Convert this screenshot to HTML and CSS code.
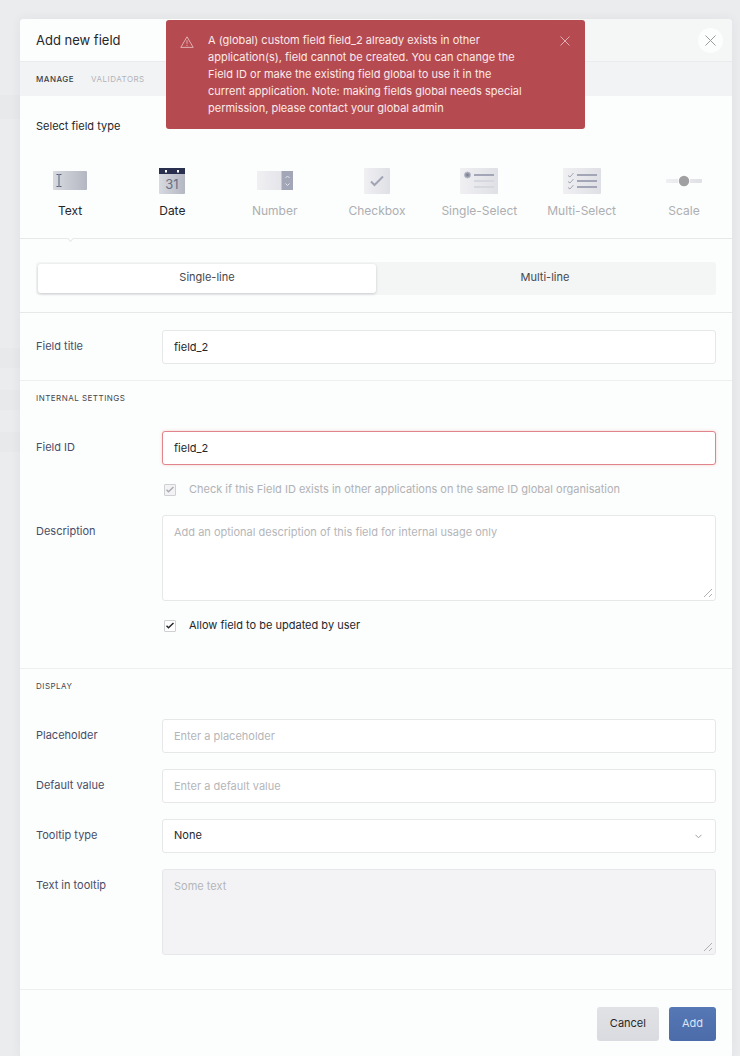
FILE: index.html
```html
<!DOCTYPE html>
<html lang="en">
<head>
<meta charset="utf-8">
<meta name="viewport" content="width=device-width, initial-scale=1">
<title>Add new field</title>
<link rel="stylesheet" href="styles.css">
</head>
<body>
<div class="toast" role="alert">
  <svg class="toast-icon" width="14" height="12" viewBox="0 0 14 12" fill="none" stroke="currentColor"><path d="M7 .8 13.2 11.4H.8Z"/><path d="M7 4.2v3.6M7 8.8v1.3"/></svg>
  <p class="toast-text">A (global) custom field field_2 already exists in other application(s), field cannot be created. You can change the Field ID or make the existing field global to use it in the current application. Note: making fields global needs special permission, please contact your global admin</p>
  <button class="toast-close" type="button" aria-label="Dismiss"><svg width="10" height="10" viewBox="0 0 10 10" stroke="currentColor"><path d="M.5.5l9 9M9.500.5l-9 9"/></svg></button>
</div>
<form class="panel">
  <header class="panel-header">
    <h1 class="title">Add new field</h1>
    <button class="close" type="button" aria-label="Close"><svg width="11" height="11" viewBox="0 0 11 11" stroke="currentColor"><path d="M.5.5l10 10M10.500.5l-10 10"/></svg></button>
  </header>
  <nav class="tabs">
    <a class="tab tab-active" href="#manage">MANAGE</a>
    <a class="tab" href="#validators">VALIDATORS</a>
  </nav>
  <section class="types">
    <h2 class="types-title">Select field type</h2>
    <div class="type-list">
      <button class="type type-on type-current" type="button">
        <svg width="36" height="26" viewBox="0 0 36 26"><defs><linearGradient id="g1"><stop stop-color="#d8dae0"/><stop offset="1" stop-color="#b4b7c2"/></linearGradient><linearGradient id="g2"><stop stop-color="#f0f0f3"/><stop offset="1" stop-color="#dfe0e5"/></linearGradient></defs><rect x="1" y="3" width="34" height="19" rx="1" fill="url(#g1)"/><path d="M4.500 6.500h2l.5.5.5-.5h2M7 7v11M4.500 18.500h2l.5-.5.5.5h2" fill="none" stroke="#596078"/></svg>
        <span>Text</span>
      </button>
      <button class="type type-on" type="button">
        <svg width="26" height="26" viewBox="0 0 26 26"><rect width="26" height="26" rx="1" fill="url(#g1)"/><path d="M0 0h26v6H0z" fill="#29304f"/><path d="M6 2h2v2.500H6zM18 2h2v2.500h-2z" fill="#fff"/><text class="date-num" x="13" y="21" text-anchor="middle">31</text></svg>
        <span>Date</span>
      </button>
      <button class="type" type="button" disabled>
        <svg width="36" height="26" viewBox="0 0 36 26"><rect y="3" width="36" height="19" rx="1" fill="url(#g2)"/><path d="M24.500 3H36v19H24.500z" fill="#a2a6b6"/><path d="M28.500 10l2-2 2 2M28.500 15.500l2 2 2-2" fill="none" stroke="#e4e5ec"/></svg>
        <span>Number</span>
      </button>
      <button class="type" type="button" disabled>
        <svg width="26" height="26" viewBox="0 0 26 26"><rect width="26" height="26" rx="1" fill="url(#g2)"/><path d="M7 13.500l3.500 3.500L19 8.500" fill="none" stroke="#a0a4b5" stroke-width="2"/></svg>
        <span>Checkbox</span>
      </button>
      <button class="type" type="button" disabled>
        <svg width="38" height="26" viewBox="0 0 38 26"><rect width="38" height="26" rx="1" fill="url(#g2)"/><circle cx="7.500" cy="7" r="3" fill="#9498a8" stroke="#b8bbc7"/><circle cx="7.500" cy="7" r="1" fill="#777c92"/><path d="M14 7h20" stroke="#a2a6b6" stroke-width="2"/><path d="M14 13h20M14 19h20" stroke="#d6d8df" stroke-width="2"/></svg>
        <span>Single-Select</span>
      </button>
      <button class="type" type="button" disabled>
        <svg width="38" height="26" viewBox="0 0 38 26"><rect width="38" height="26" rx="1" fill="url(#g2)"/><path d="M14 7h20M14 13h20M14 19h20" stroke="#a2a6b6" stroke-width="2"/><path d="M5 7.500l2 1.500 3.500-4M5 13.500l2 1.500 3.500-4M5 19.500l2 1.500 3.500-4" fill="none" stroke="#a2a6b6"/></svg>
        <span>Multi-Select</span>
      </button>
      <button class="type" type="button" disabled>
        <svg width="38" height="26" viewBox="0 0 38 26"><rect x="1" y="11" width="36" height="4" rx="1" fill="url(#g2)"/><circle cx="19" cy="13" r="6.200" fill="#fcfdfd"/><circle cx="19" cy="13" r="5.200" fill="#a0a0a2"/></svg>
        <span>Scale</span>
      </button>
    </div>
  </section>
  <div class="mode">
    <div class="segments">
      <button class="segment segment-on" type="button">Single-line</button>
      <button class="segment" type="button">Multi-line</button>
    </div>
  </div>
  <section class="section section-title">
    <div class="row">
      <label class="label" for="field-title">Field title</label>
      <input class="control" id="field-title" type="text" value="field_2">
    </div>
  </section>
  <section class="section">
    <h2 class="heading">INTERNAL SETTINGS</h2>
    <div class="row">
      <label class="label" for="field-id">Field ID</label>
      <input class="control control-error" id="field-id" type="text" value="field_2" aria-invalid="true">
    </div>
    <div class="check-row">
      <label class="check check-disabled"><span class="box"><input class="box-input" type="checkbox" checked disabled><svg class="box-tick" width="8" height="7" viewBox="0 0 8 7"><path d="M.5 3.800l2 2L7.500 1"/></svg></span>Check if this Field ID exists in other applications on the same ID global organisation</label>
    </div>
    <div class="row">
      <label class="label" for="description">Description</label>
      <textarea class="control area" id="description" placeholder="Add an optional description of this field for internal usage only"></textarea>
    </div>
    <div class="check-row check-last">
      <label class="check"><span class="box"><input class="box-input" type="checkbox" checked><svg class="box-tick" width="8" height="7" viewBox="0 0 8 7"><path d="M.5 3.800l2 2L7.500 1"/></svg></span>Allow field to be updated by user</label>
    </div>
  </section>
  <section class="section display">
    <h2 class="heading">DISPLAY</h2>
    <div class="rows">
      <div class="row">
        <label class="label" for="placeholder">Placeholder</label>
        <input class="control" id="placeholder" type="text" placeholder="Enter a placeholder">
      </div>
      <div class="row">
        <label class="label" for="default">Default value</label>
        <input class="control" id="default" type="text" placeholder="Enter a default value">
      </div>
      <div class="row">
        <label class="label" for="tooltip-type">Tooltip type</label>
        <div class="select">
          <select class="control" id="tooltip-type"><option>None</option></select>
          <svg class="chevron" width="7" height="5" viewBox="0 0 7 5" fill="none" stroke="#9b9da3"><path d="M.5.8l3 3 3-3"/></svg>
        </div>
      </div>
      <div class="row">
        <label class="label" for="tooltip-text">Text in tooltip</label>
        <textarea class="control area" id="tooltip-text" placeholder="Some text" disabled></textarea>
      </div>
    </div>
  </section>
  <footer class="footer">
    <button class="button" type="button">Cancel</button>
    <button class="button button-primary" type="submit">Add</button>
  </footer>
</form>
</body>
</html>
```

FILE: styles.css
```css
* {
  box-sizing: border-box;
}

body {
  margin: 0;
  padding: 19px 8px 0 20px;
  background:
    linear-gradient(#e8e9eb, #e8e9eb) 0 95px / 20px 24px no-repeat,
    linear-gradient(#e8e9eb, #e8e9eb) 0 348px / 20px 20px no-repeat,
    linear-gradient(#e8e9eb, #e8e9eb) 0 390px / 20px 20px no-repeat,
    linear-gradient(#e8e9eb, #e8e9eb) 0 432px / 20px 20px no-repeat,
    #ebecee;
  color: #25272b;
  font: 11px/17px Inter, "Liberation Sans", sans-serif;
}

button,
input,
select,
textarea {
  font: inherit;
  color: inherit;
}

button {
  border: 0;
  padding: 0;
  background: none;
}

h1,
h2,
p {
  margin: 0;
  font-weight: 400;
}

svg {
  display: block;
}

.panel {
  border-radius: 4px;
  background: #fcfdfd;
  box-shadow: 0 0 12px rgba(40, 44, 60, 0.06);
}

.toast {
  position: absolute;
  top: 20px;
  left: 166px;
  right: 155px;
  display: flex;
  align-items: flex-start;
  padding: 12px 15px 12px 14px;
  border-radius: 3px;
  background: #b54b50;
  color: #fbe9ea;
}

.toast-icon {
  flex: none;
  margin: 4px 14px 0 0;
  color: #e3aeb1;
}

.toast-text {
  flex: 1;
  max-width: 320px;
}

.toast-close {
  margin: 4px 0 0 auto;
  color: #e3aeb1;
}

.panel-header {
  display: flex;
  justify-content: space-between;
  align-items: center;
  height: 43px;
  padding: 0 9px 0 16px;
  border-bottom: 1px solid #e9ebec;
  border-radius: 4px 4px 0 0;
  background: linear-gradient(90deg, #fcfdfd 20%, #f5f6f6 80%);
}

.title {
  font-size: 13px;
}

.close {
  display: grid;
  place-items: center;
  width: 25px;
  height: 25px;
  border-radius: 50%;
  background: #fcfdfd;
  color: #999b9e;
}

.tabs {
  display: flex;
  gap: 17px;
  padding: 9px 16px 8px;
  background: #f2f3f5;
}

.tab {
  font-size: 8px;
  letter-spacing: 0.06em;
  color: #b3b4b8;
  text-decoration: none;
}

.tab-active {
  color: #3c3e43;
  font-weight: 500;
}

.types {
  padding-top: 22px;
  border-bottom: 1px solid #e6e8e9;
}

.types-title {
  padding: 0 16px;
  font-size: 11px;
}

.type-list {
  display: flex;
  justify-content: space-between;
  padding: 33px 8px 0 10px;
}

.type {
  position: relative;
  display: flex;
  flex-direction: column;
  align-items: center;
  gap: 8px;
  width: 80px;
  padding-bottom: 19px;
  color: #adafb2;
  font-size: 12px;
  white-space: nowrap;
}

.type-on {
  color: #25272b;
}

.type-current::after {
  content: "";
  position: absolute;
  bottom: -3px;
  width: 4px;
  height: 4px;
  border: solid #e6e8e9;
  border-width: 0 1px 1px 0;
  background: #fcfdfd;
  transform: rotate(45deg);
}

.date-num {
  fill: #687087;
  font-size: 13px;
}

.mode {
  padding: 23px 16px 17px;
  border-bottom: 1px solid #e6e8e9;
}

.segments {
  display: flex;
  padding: 2px;
  border-radius: 3px;
  background: #f4f5f5;
}

.segment {
  flex: 1;
  height: 29px;
  padding-bottom: 2px;
  border-radius: 3px;
  color: #45474e;
}

.segment-on {
  background: #fff;
  box-shadow: 0 1px 3px rgba(30, 34, 50, 0.2);
}

.section {
  padding: 0 16px;
  border-bottom: 1px solid #eef0f0;
}

.section-title {
  padding: 17px 16px 16px;
}

.heading {
  padding: 9px 0 24px;
  font-size: 8px;
  letter-spacing: 0.06em;
  color: #45474c;
}

.row {
  display: grid;
  grid-template-columns: 126px 1fr;
  align-items: start;
}

.label {
  padding-top: 8px;
  color: #484d68;
}

.control {
  display: block;
  width: 100%;
  height: 34px;
  margin: 0;
  padding: 0 11px 1px;
  border: 1px solid #e6e7e9;
  border-radius: 3px;
  background: #fff;
  outline: 0;
}

.control::placeholder {
  color: #b4b6ba;
}

.control-error {
  border-color: #e0858b;
  box-shadow: 0 0 3px rgba(224, 100, 108, 0.3);
}

.area {
  height: 86px;
  padding-top: 8px;
}

.area::-webkit-resizer {
  background: linear-gradient(135deg, transparent 45%, #aeb0b4 45%, #aeb0b4 55%, transparent 55%, transparent 76%, #aeb0b4 76%, #aeb0b4 86%, transparent 86%) 4px 4px / 8px 8px no-repeat;
}

.area:disabled {
  background: #f3f3f5;
}

.check-row {
  padding: 16px 0 17px 128px;
}

.check-last {
  padding-bottom: 34px;
}

.check {
  display: flex;
  align-items: center;
  gap: 13px;
}

.check-disabled {
  color: #b0b2b5;
}

.box {
  display: grid;
  place-items: center;
  color: #25272b;
}

.box-input {
  grid-area: 1 / 1;
  appearance: none;
  width: 12px;
  height: 12px;
  margin: 0;
  border: 1px solid #cfd0d3;
  border-radius: 1px;
  background: #fff;
}

.box-input:disabled {
  background: #f3f3f5;
}

.box-tick {
  z-index: 1;
  grid-area: 1 / 1;
  fill: none;
  stroke: currentColor;
  stroke-width: 1.5;
  pointer-events: none;
}

.check-disabled .box-tick {
  stroke: #a9abaf;
}

.display {
  padding-bottom: 34px;
}

.rows {
  display: grid;
  gap: 16px;
}

.select {
  position: relative;
}

.select .control {
  appearance: none;
}

.chevron {
  position: absolute;
  top: 15px;
  right: 14px;
  pointer-events: none;
}

.footer {
  display: flex;
  justify-content: flex-end;
  gap: 10px;
  padding: 17px 16px;
}

.button {
  height: 34px;
  padding: 0 13px 2px;
  border-radius: 3px;
  background: linear-gradient(#e0e2e5, #d9dbe0);
}

.button-primary {
  background: linear-gradient(#5678b5, #4b6ba9);
  color: #dbe4f6;
}
```
